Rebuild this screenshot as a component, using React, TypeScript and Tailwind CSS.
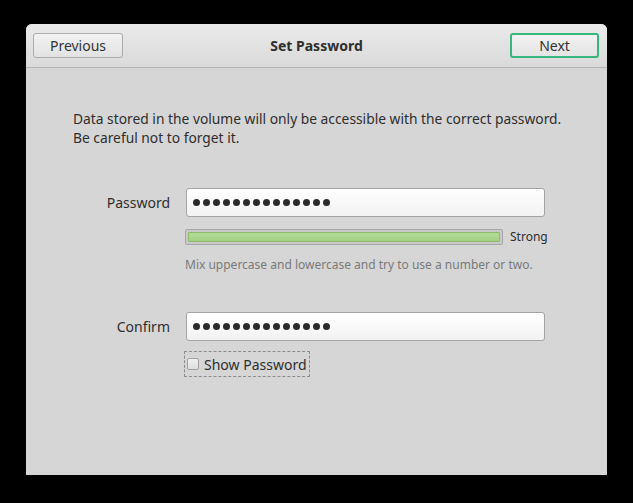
import React from "react";

const font = { fontFamily: '"Noto Sans", "DejaVu Sans", sans-serif' };

function Dots() {
  return (
    <div className="flex items-center gap-[3px]">
      {Array.from({ length: 14 }).map((_, i) => (
        <div key={i} className="w-[7px] h-[7px] rounded-full bg-[#2a2a2a]" />
      ))}
    </div>
  );
}

function Entry() {
  return (
    <div className="w-[359px] h-[29px] rounded-[3px] border border-[#a4a4a4] bg-gradient-to-b from-[#ffffff] to-[#f2f2f2] flex items-center pl-[6px]">
      <Dots />
    </div>
  );
}

export default function App() {
  return (
    <div className="w-[633px] h-[503px] bg-black pl-[26px] pt-[24px]" style={font}>
      <div className="w-[581px] h-[451px] bg-[#d6d6d6] rounded-t-[6px] overflow-hidden flex flex-col">
        <div className="h-[44px] shrink-0 border-b border-[#b4b4b4] bg-gradient-to-b from-[#eaeaea] to-[#dadada] flex items-center justify-between pl-[7px] pr-[8px]">
          <div className="w-[90px] h-[25px] rounded-[3px] border border-[#acacac] bg-gradient-to-b from-[#f2f2f2] to-[#e2e2e2] flex items-center justify-center text-[14px] text-[#333]">
            Previous
          </div>
          <div className="text-[14px] font-bold text-[#2e2e2e]">Set Password</div>
          <div className="w-[89px] h-[25px] rounded-[3px] border-2 border-[#35b77d] bg-gradient-to-b from-[#f2f2f2] to-[#e4e4e4] flex items-center justify-center text-[14px] text-[#333]">
            Next
          </div>
        </div>
        <div className="flex flex-col pl-[47px] pt-[41px]">
          <p className="text-[13.8px] leading-[19px] text-[#2e2e2e]">
            Data stored in the volume will only be accessible with the correct password.
            <br />
            Be careful not to forget it.
          </p>
          <div className="flex flex-col mt-[41px] ml-[-47px]">
            <div className="flex items-center">
              <div className="w-[144px] text-right text-[14px] text-[#2e2e2e]">Password</div>
              <div className="ml-[16px]">
                <Entry />
              </div>
            </div>
            <div className="flex items-center ml-[159px] mt-[11px]">
              <div className="w-[318px] h-[16px] rounded-[2px] border border-[#a6a6a6] bg-[#c9c9c9] p-[2px]">
                <div className="w-full h-full rounded-[1px] border border-[#8dbb6c] bg-gradient-to-b from-[#b4db96] to-[#a3d182]" />
              </div>
              <div className="ml-[7px] text-[12px] text-[#2e2e2e]">Strong</div>
            </div>
            <div className="ml-[159px] mt-[10px] text-[12px] text-[#7a7a7a]">
              Mix uppercase and lowercase and try to use a number or two.
            </div>
            <div className="flex items-center mt-[38px]">
              <div className="w-[144px] text-right text-[14px] text-[#2e2e2e]">Confirm</div>
              <div className="ml-[16px]">
                <Entry />
              </div>
            </div>
            <div className="ml-[158px] mt-[10px] w-[126px] h-[26px] border border-dashed border-[#8c8c8c] flex items-center pl-[2px]">
              <div className="w-[12px] h-[12px] rounded-[2px] border border-[#a2a2a2] bg-gradient-to-b from-[#f0f0f0] to-[#dedede]" />
              <div className="ml-[5px] text-[14px] text-[#2e2e2e]">Show Password</div>
            </div>
          </div>
        </div>
      </div>
    </div>
  );
}
